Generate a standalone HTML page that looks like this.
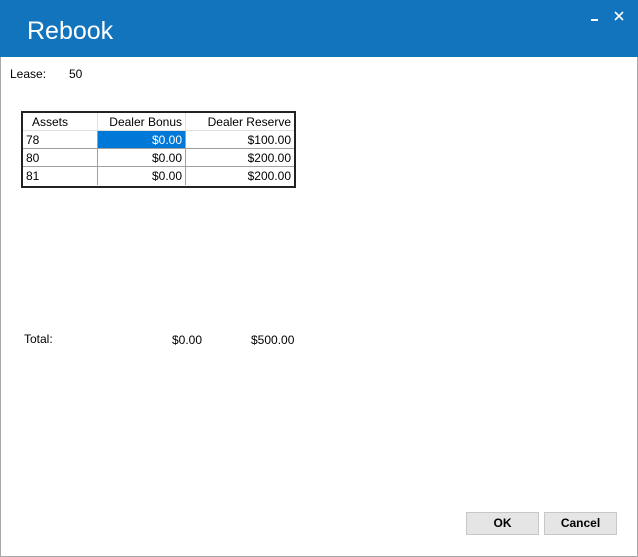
<!DOCTYPE html>
<html><head><style>
*{margin:0;padding:0;box-sizing:border-box}
body{width:638px;height:557px;background:#fff;font-family:"Liberation Sans",sans-serif;font-size:12px;color:#000;position:relative;overflow:hidden}
.win{position:absolute;left:0;top:0;width:638px;height:557px;border:1px solid #a8a8a8;border-top:none}
.hdr{position:absolute;left:0;top:0;width:638px;height:57px;background:#1174bd}
.title{position:absolute;left:27px;top:17px;color:#fff;font-size:25px;font-weight:300}
.t{position:absolute;font-size:12px;white-space:nowrap}
.grid{position:absolute;left:21px;top:111px;width:275px;height:77px;border:2px solid #222;background:#fff}
.c{position:absolute;height:18px;line-height:18px;padding:0 3px;border-right:1px solid #a0a0a0;border-bottom:1px solid #a0a0a0}
.btn{position:absolute;top:512px;width:73px;height:23px;background:#e5e5e5;border:1px solid #c8c8c8;font-weight:bold;text-align:center;line-height:21px}
</style></head><body>
<div class="win"></div>
<div class="hdr"><div class="title">Rebook</div>
<div style="position:absolute;left:591px;top:19px;width:7px;height:2px;background:#fff"></div>
<svg style="position:absolute;left:614px;top:11px" width="10" height="10"><path d="M1 1L9 9M9 1L1 9" stroke="#fff" stroke-width="1.6"/></svg>
</div>
<div class="t" style="left:10px;top:67px">Lease:</div>
<div class="t" style="left:69px;top:67px">50</div>
<div class="grid">
<div class="c" style="left:0;top:0;width:75px;padding-left:9px;border-color:#e0e0e0">Assets</div>
<div class="c" style="left:75px;top:0;width:88px;text-align:right;border-color:#e0e0e0">Dealer Bonus</div>
<div class="c" style="left:163px;top:0;width:108px;text-align:right;border-color:#e0e0e0;border-right:none">Dealer Reserve</div>
<div class="c" style="left:0;top:18px;width:75px">78</div>
<div class="c" style="left:75px;top:18px;width:88px;text-align:right;background:#0078d7;color:#fff">$0.00</div>
<div class="c" style="left:163px;top:18px;width:108px;text-align:right;border-right:none">$100.00</div>
<div class="c" style="left:0;top:36px;width:75px">80</div>
<div class="c" style="left:75px;top:36px;width:88px;text-align:right">$0.00</div>
<div class="c" style="left:163px;top:36px;width:108px;text-align:right;border-right:none">$200.00</div>
<div class="c" style="left:0;top:54px;width:75px;border-bottom:none">81</div>
<div class="c" style="left:75px;top:54px;width:88px;text-align:right;border-bottom:none">$0.00</div>
<div class="c" style="left:163px;top:54px;width:108px;text-align:right;border:none">$200.00</div>
</div>
<div class="t" style="left:24px;top:332px">Total:</div>
<div class="t" style="left:172px;top:333px">$0.00</div>
<div class="t" style="left:251px;top:333px">$500.00</div>
<div class="btn" style="left:466px">OK</div>
<div class="btn" style="left:544px">Cancel</div>
</body></html>
